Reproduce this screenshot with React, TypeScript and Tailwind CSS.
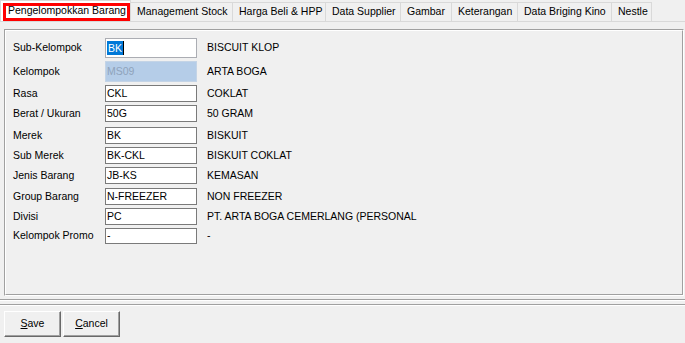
import type { ReactNode } from "react";

type Row = {
  label: string;
  value: ReactNode;
  desc: string;
  rowClass: string;
  boxClass: string;
};

const tabs = [
  { label: "Management Stock", width: "w-[102px]" },
  { label: "Harga Beli & HPP", width: "w-[93px]" },
  { label: "Data Supplier", width: "w-[75px]" },
  { label: "Gambar", width: "w-[51px]" },
  { label: "Keterangan", width: "w-[66px]" },
  { label: "Data Briging Kino", width: "w-[94px]" },
  { label: "Nestle", width: "w-[40px]" },
];

const normalBox = "h-[17px] bg-white border border-[#7a7a7a]";

const rows: Row[] = [
  {
    label: "Sub-Kelompok",
    value: (
      <span className="flex items-center">
        <span className="bg-[#0078d7] text-white leading-[14px] px-[1px]">BK</span>
        <span className="w-px h-[14px] bg-black" />
      </span>
    ),
    desc: "BISCUIT KLOP",
    rowClass: "mt-[7px]",
    boxClass: "h-[20px] bg-white border border-[#abadb3]",
  },
  {
    label: "Kelompok",
    value: <span className="text-[#8fa3bb]">MS09</span>,
    desc: "ARTA BOGA",
    rowClass: "mt-[3px]",
    boxClass: "h-[21px] bg-[#b5cde8] border border-[#c4d4e6]",
  },
  { label: "Rasa", value: "CKL", desc: "COKLAT", rowClass: "mt-[3px]", boxClass: normalBox },
  { label: "Berat / Ukuran", value: "50G", desc: "50 GRAM", rowClass: "mt-[3px]", boxClass: normalBox },
  { label: "Merek", value: "BK", desc: "BISKUIT", rowClass: "mt-[5px]", boxClass: normalBox },
  { label: "Sub Merek", value: "BK-CKL", desc: "BISKUIT COKLAT", rowClass: "mt-[3px]", boxClass: normalBox },
  { label: "Jenis Barang", value: "JB-KS", desc: "KEMASAN", rowClass: "mt-[3px]", boxClass: normalBox },
  { label: "Group Barang", value: "N-FREEZER", desc: "NON FREEZER", rowClass: "mt-[4px]", boxClass: normalBox },
  {
    label: "Divisi",
    value: "PC",
    desc: "PT. ARTA BOGA CEMERLANG (PERSONAL",
    rowClass: "mt-[3px]",
    boxClass: normalBox,
  },
  { label: "Kelompok Promo", value: "-", desc: "-", rowClass: "mt-[3px]", boxClass: "h-[16px] bg-white border border-[#7a7a7a]" },
];

function WinButton({ children }: { children: ReactNode }) {
  return (
    <button className="w-[57px] h-[26px] bg-[#f0f0f0] border border-t-white border-l-white border-r-[#696969] border-b-[#696969] shadow-[inset_-1px_-1px_0_#a0a0a0] flex items-center justify-center">
      {children}
    </button>
  );
}

export default function App() {
  return (
    <div className="w-[685px] h-[343px] overflow-hidden bg-[#f0f0f0] text-black text-[10.5px] font-['Liberation_Sans',Arial,sans-serif]">
      {/* tabs */}
      <div className="flex items-end h-[21px]">
        <div className="relative w-[131px] h-[21px] bg-white border border-b-0 border-[#d9d9d9] pl-[7px] flex items-center whitespace-nowrap">
          Pengelompokkan Barang
          <div className="absolute left-[2px] top-[2px] w-[127px] h-[18px] border-[3px] border-[#ff0000]" />
        </div>
        {tabs.map((t) => (
          <div
            key={t.label}
            className={`${t.width} h-[19px] border-t border-r border-[#d9d9d9] bg-[#f0f0f0] pl-[6px] flex items-center whitespace-nowrap`}
          >
            {t.label}
          </div>
        ))}
      </div>

      {/* tab page */}
      <div className="border-t border-[#d9d9d9] pt-[7px]">
        <div className="ml-[4px] w-[680px] h-[267px] border border-t-[#a0a0a0] border-l-[#a0a0a0] border-r-white border-b-white">
          <div className="h-full border border-t-white border-l-white border-r-[#a0a0a0] border-b-[#a0a0a0] pl-[7px] flex flex-col">
            {rows.map((r) => (
              <div key={r.label} className={`flex items-center ${r.rowClass}`}>
                <div className="w-[92px] whitespace-nowrap">{r.label}</div>
                <div className={`w-[92px] flex items-center pl-[1px] ${r.boxClass}`}>{r.value}</div>
                <div className="pl-[10px] whitespace-nowrap">{r.desc}</div>
              </div>
            ))}
          </div>
        </div>
      </div>

      {/* separators */}
      <div className="mt-[3px] border-t border-b border-t-[#a0a0a0] border-b-white" />
      <div className="mt-[3px] border-t border-b border-t-[#a0a0a0] border-b-white" />

      {/* buttons */}
      <div className="mt-[5px] pl-[4px] flex gap-[2px]">
        <WinButton>
          <span>
            <span className="underline">S</span>ave
          </span>
        </WinButton>
        <WinButton>
          <span>
            <span className="underline">C</span>ancel
          </span>
        </WinButton>
      </div>
    </div>
  );
}
